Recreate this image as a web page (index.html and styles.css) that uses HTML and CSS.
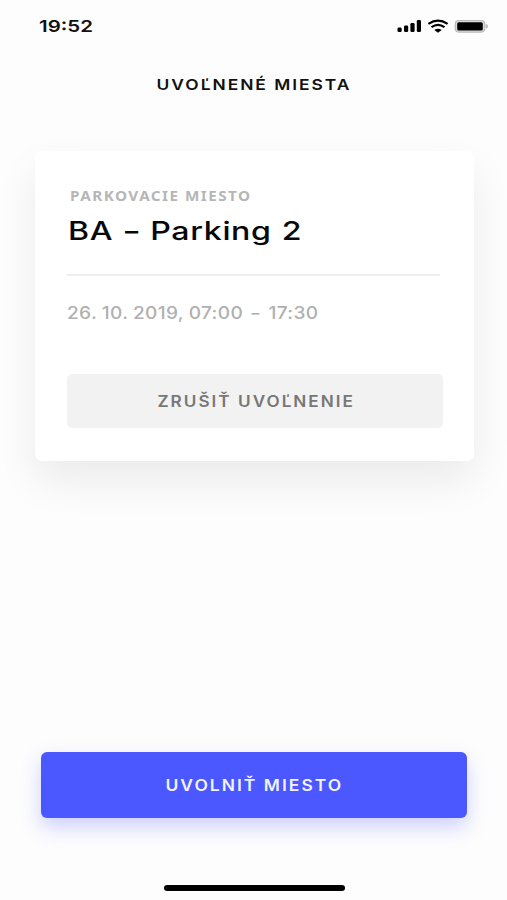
FILE: index.html
```html
<!DOCTYPE html>
<html lang="sk">
<head>
<meta charset="utf-8">
<title>Uvoľnené miesta</title>
<link rel="stylesheet" href="styles.css">
</head>
<body>
<div class="screen">
  <header class="status">
    <span class="time">19:52</span>
    <svg class="status-icons" width="92" height="16" viewBox="0 0 92 16">
      <rect x="0.5" y="9.6" width="4.2" height="4.4" rx="1.3"/>
      <rect x="7" y="7.4" width="4.2" height="6.6" rx="1.3"/>
      <rect x="13.4" y="5" width="4.2" height="9" rx="1.3"/>
      <rect x="19.8" y="2" width="4.2" height="12" rx="1.3"/>
      <g fill="none" stroke="#000" stroke-width="2.2">
        <path d="M31.4 5.8Q41 -.6 50.6 5.8"/>
        <path d="M34.5 9.2Q41 4.6 47.5 9.2"/>
      </g>
      <path d="M37.3 11.9Q41 9.5 44.7 11.9L41 14.8Z"/>
      <rect x="58.3" y="2.5" width="29.4" height="11.6" rx="3.5" fill="#ddd" stroke="#b9b9b9" stroke-width="1.2"/>
      <rect x="60.2" y="4.2" width="25.6" height="8.2" rx="1.5"/>
      <path d="M88.8 5.8Q91 6.5 91 8.3T88.8 10.8Z" fill="#b9b9b9"/>
    </svg>
  </header>
  <h1 class="title"><span>UVOĽNENÉ MIESTA</span></h1>
  <main class="card">
    <p class="label"><span>PARKOVACIE MIESTO</span></p>
    <h2 class="name"><span>BA <i class="dash">–</i> Parking 2</span></h2>
    <hr class="rule">
    <p class="date"><span>26. 10. 2019, 07:00 <i class="dash">–</i> 17:30</span></p>
    <button class="cancel"><span>ZRUŠIŤ UVOĽNENIE</span></button>
  </main>
  <button class="release"><span>UVOLNIŤ MIESTO</span></button>
  <div class="home"></div>
</div>
</body>
</html>
```
FILE: styles.css
```css
* { box-sizing: border-box; }
body { margin: 0; background: #fdfdfd; font-family: Inter, "Noto Sans", sans-serif; color: #111; }
h1, h2, p { margin: 0; }
button { border: 0; padding: 0; font-family: inherit; }
span { display: inline-block; white-space: nowrap; }
.screen { width: 507px; height: 900px; overflow: hidden; display: flex; flex-direction: column; }
.status { height: 52px; flex: none; padding: 0 18px 0 39px; display: flex; align-items: center; justify-content: space-between; }
.time { font-size: 16.5px; font-weight: 600; transform: scaleX(1.24); transform-origin: left; }
.title { height: 66px; line-height: 66px; text-align: center; font-size: 15px; font-weight: 600; letter-spacing: 1.7px; }
.title span { transform: scaleX(1.16); }
.card { margin: 33px 33px 0 35px; height: 310px; flex: none; border-radius: 7px; background: #fff; box-shadow: 0 20px 42px rgba(0, 0, 0, .075); padding: 35px 31px 0 32px; }
.label { height: 20px; line-height: 20px; padding-left: 3px; font-family: "Noto Sans", sans-serif; font-size: 13.5px; font-weight: 700; letter-spacing: 1.3px; color: #b6b6b6; }
.name { height: 49px; line-height: 50px; padding-left: 1px; font-size: 25.5px; font-weight: 500; letter-spacing: .5px; word-spacing: .8px; color: #080808; }
.label span, .name span, .date span { transform-origin: left; }
.label span { transform: scaleX(1.13); }
.name span { transform: scaleX(1.26); }
.dash { display: inline-block; font-style: normal; transform: scaleX(.82); }
.rule { margin: 19px 3px 0 0; border: 0; height: 2px; background: #eee; }
.date { margin-top: 25px; height: 24px; line-height: 24px; font-size: 17px; font-weight: 500; letter-spacing: .35px; word-spacing: -.6px; color: #b0b0b0; }
.date span { transform: scaleX(1.12); }
.date .dash { margin: 0 2.6px; }
.cancel { margin-top: 49px; width: 376px; height: 54px; border-radius: 5px; background: #f2f2f2; color: #777; font-size: 15.3px; font-weight: 600; letter-spacing: 1.8px; }
.cancel span { transform: translateX(1px) scaleX(1.12); }
.release { margin: 291px 40px 0 41px; height: 66px; flex: none; border-radius: 6px; background: #4b57ff; box-shadow: 0 9px 20px rgba(75, 87, 255, .27); color: #f2f3ff; font-size: 15.6px; font-weight: 600; letter-spacing: 1.8px; }
.release span { transform: scaleX(1.12); }
.home { margin: 67px 0 0 164px; width: 181px; height: 6px; flex: none; border-radius: 3px; background: #000; }
```
